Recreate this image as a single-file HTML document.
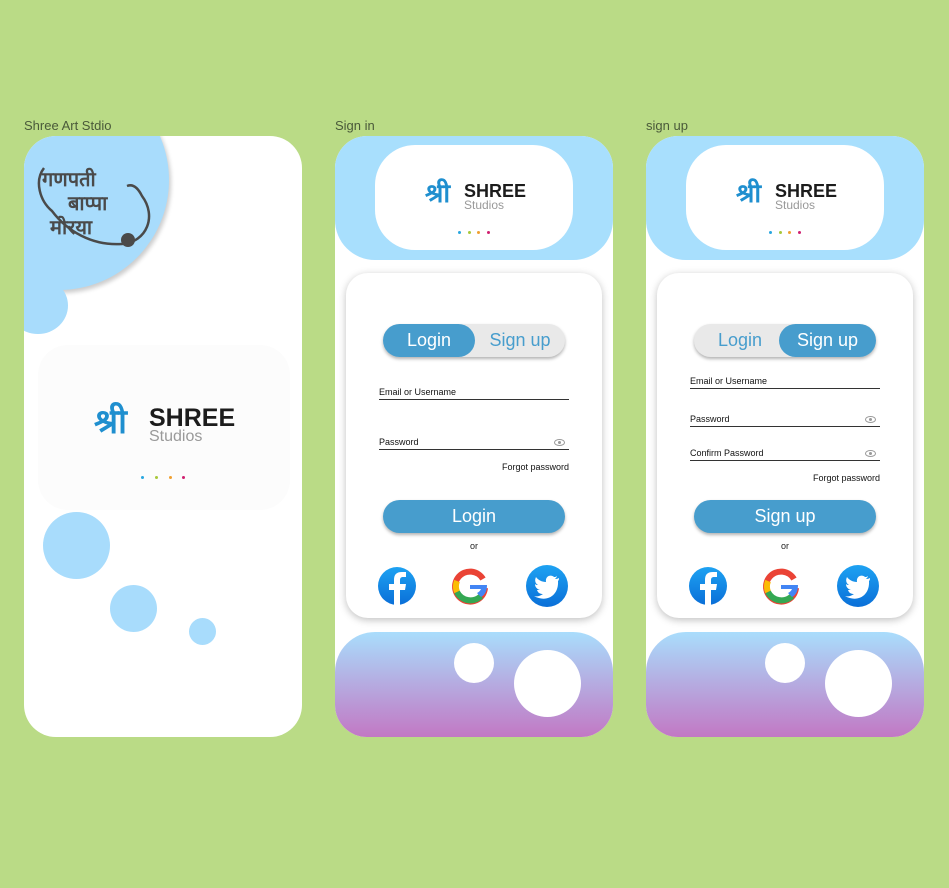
<!DOCTYPE html><html><head><style>
*{margin:0;padding:0;box-sizing:border-box}
body{width:949px;height:888px;background:#badb86;position:relative;font-family:"Liberation Sans",sans-serif;overflow:hidden}
.a{position:absolute}
.lbl{font-size:13px;color:#4a5a3a}
.ph{position:absolute;top:136px;width:278px;height:601px;background:#fff;border-radius:32px;overflow:hidden}
.top{position:absolute;left:0;top:0;width:278px;height:124px;background:#a8dffd;border-radius:0 0 40px 40px}
.pill{position:absolute;left:40px;top:9px;width:198px;height:105px;background:#fff;border-radius:40px}
.card{position:absolute;left:11px;top:137px;width:256px;height:345px;background:#fff;border-radius:22px;box-shadow:0 2px 8px rgba(0,0,0,.25)}
.bot{position:absolute;left:0;top:496px;width:278px;height:105px;border-radius:40px 40px 0 0;background:linear-gradient(#a9ddfc,#c278c4)}
.c{position:absolute;border-radius:50%;background:#a8dcfc}
.w{position:absolute;border-radius:50%;background:#fff}
.tog{position:absolute;left:37px;top:51px;width:182px;height:33px;background:#e9e9e9;border-radius:17px;box-shadow:0 2px 3px rgba(0,0,0,.3);font-size:18px;color:#479dcd}
.tog span{position:absolute;top:0;height:33px;line-height:33px;text-align:center;width:92px}
.on{background:#479dcd;color:#fff;border-radius:17px}
.fl{position:absolute;left:33px;width:190px;border-bottom:1px solid #333;font-size:9px;color:#111;padding-bottom:2px}
.eye{position:absolute;right:4px;bottom:3px;width:11px;height:7px;border:1px solid #999;border-radius:50%}
.eye:after{content:"";position:absolute;left:3px;top:1px;width:3px;height:3px;border-radius:50%;background:#999}
.fg{position:absolute;right:33px;font-size:9px;color:#111}
.btn{position:absolute;left:37px;width:182px;height:33px;background:#479dcd;border-radius:17px;color:#fff;font-size:18px;text-align:center;line-height:33px;box-shadow:0 2px 3px rgba(0,0,0,.3)}
.or{position:absolute;left:0;width:256px;text-align:center;font-size:9px;color:#222}
.shri{position:absolute;color:#1f8fcf;font-family:"Noto Sans CJK SC",sans-serif;font-weight:bold}
.sh{position:absolute;font-weight:bold;color:#1c1c1c}
.st{position:absolute;color:#999}
.d{position:absolute;width:3px;height:3px;border-radius:2px}
</style></head><body>
<div class="a lbl" style="left:24px;top:118px">Shree Art Stdio</div>
<div class="a lbl" style="left:335px;top:118px">Sign in</div>
<div class="a lbl" style="left:646px;top:118px">sign up</div>

<!-- frame 1 -->
<div class="ph" style="left:24px">
 <div class="c" style="left:-75px;top:-66px;width:220px;height:220px;box-shadow:2px 3px 4px rgba(0,0,0,.2)"></div>
 <div class="c" style="left:-16px;top:141px;width:60px;height:57px"></div>
 <svg class="a" style="left:8px;top:20px" width="130" height="100"><path d="M12 12 C2 25 8 45 20 55 C35 75 60 90 90 88 C115 86 125 60 110 40 C105 30 100 28 95 30" fill="none" stroke="#4a4a4a" stroke-width="2.5"/><circle cx="96" cy="84" r="7" fill="#4a4a4a"/></svg>
 <div class="a" style="left:18px;top:30px;font-family:'Noto Sans CJK SC',sans-serif;font-weight:bold;color:#4a4a4a;font-size:20px;line-height:24px;white-space:nowrap">
  <div>गणपती</div><div style="margin-left:26px">बाप्पा</div><div style="margin-left:8px">मोरया</div>
 </div>
 <div class="a" style="left:14px;top:209px;width:252px;height:165px;background:#fcfcfc;border-radius:30px"></div>
 <div class="shri" style="left:70px;top:258px;font-size:34px">श्री</div>
 <div class="sh" style="left:125px;top:268px;font-size:25px">SHREE</div>
 <div class="st" style="left:125px;top:292px;font-size:16px">Studios</div>
 <div class="d" style="left:117px;top:340px;background:#29a7e0"></div>
 <div class="d" style="left:131px;top:340px;background:#a8c83a"></div>
 <div class="d" style="left:145px;top:340px;background:#f0a030"></div>
 <div class="d" style="left:158px;top:340px;background:#d02070"></div>
 <div class="c" style="left:19px;top:376px;width:67px;height:67px"></div>
 <div class="c" style="left:86px;top:449px;width:47px;height:47px"></div>
 <div class="c" style="left:165px;top:482px;width:27px;height:27px"></div>
</div>

<!-- frame 2 -->
<div class="ph" style="left:335px">
 <div class="top"><div class="pill">
  <div class="shri" style="left:50px;top:28px;font-size:26px">श्री</div>
  <div class="sh" style="left:89px;top:36px;font-size:18px">SHREE</div>
  <div class="st" style="left:89px;top:53px;font-size:12px">Studios</div>
  <div class="d" style="left:83px;top:86px;background:#29a7e0"></div>
  <div class="d" style="left:93px;top:86px;background:#a8c83a"></div>
  <div class="d" style="left:102px;top:86px;background:#f0a030"></div>
  <div class="d" style="left:112px;top:86px;background:#d02070"></div>
 </div></div>
 <div class="card">
  <div class="tog"><span class="on" style="left:0">Login</span><span style="left:92px;width:90px">Sign up</span></div>
  <div class="fl" style="top:114px">Email or Username</div>
  <div class="fl" style="top:164px">Password<div class="eye"></div></div>
  <div class="fg" style="top:189px">Forgot password</div>
  <div class="btn" style="top:227px">Login</div>
  <div class="or" style="top:268px">or</div>
 </div>
 <div class="bot"><div class="w" style="left:119px;top:11px;width:40px;height:40px"></div><div class="w" style="left:179px;top:18px;width:67px;height:67px"></div></div>
</div>

<!-- frame 3 -->
<div class="ph" style="left:646px">
 <div class="top"><div class="pill">
  <div class="shri" style="left:50px;top:28px;font-size:26px">श्री</div>
  <div class="sh" style="left:89px;top:36px;font-size:18px">SHREE</div>
  <div class="st" style="left:89px;top:53px;font-size:12px">Studios</div>
  <div class="d" style="left:83px;top:86px;background:#29a7e0"></div>
  <div class="d" style="left:93px;top:86px;background:#a8c83a"></div>
  <div class="d" style="left:102px;top:86px;background:#f0a030"></div>
  <div class="d" style="left:112px;top:86px;background:#d02070"></div>
 </div></div>
 <div class="card">
  <div class="tog"><span style="left:0">Login</span><span class="on" style="left:85px;width:97px">Sign up</span></div>
  <div class="fl" style="top:103px">Email or Username</div>
  <div class="fl" style="top:141px">Password<div class="eye"></div></div>
  <div class="fl" style="top:175px">Confirm Password<div class="eye"></div></div>
  <div class="fg" style="top:200px">Forgot password</div>
  <div class="btn" style="top:227px">Sign up</div>
  <div class="or" style="top:268px">or</div>
 </div>
 <div class="bot"><div class="w" style="left:119px;top:11px;width:40px;height:40px"></div><div class="w" style="left:179px;top:18px;width:67px;height:67px"></div></div>
</div>

<svg class="a" style="left:0;top:0" width="949" height="888">
<defs>
<linearGradient id="fb" x1="0" y1="0" x2="0" y2="1"><stop offset="0" stop-color="#1ea2f2"/><stop offset="1" stop-color="#0a6fd8"/></linearGradient>
<g id="ic">
 <circle cx="0" cy="0" r="19" fill="url(#fb)"/>
 <path d="M3 19 V4 H8 L9 -2 H3 V-6 C3 -8 4 -9 6 -9 H9 V-14 H5 C-1 -14 -3 -11 -3 -6 V-2 H-8 V4 H-3 V19 Z" fill="#fff"/>
 <g transform="translate(73,0)">
  <path d="M13 -7 A15 15 0 1 0 15 2" fill="none" stroke="#ea4335" stroke-width="6"/>
  <path d="M-13 -5 A15 15 0 0 0 -13 6" fill="none" stroke="#fbbc05" stroke-width="6"/>
  <path d="M-13 6 A15 15 0 0 0 11 10" fill="none" stroke="#34a853" stroke-width="6"/>
  <path d="M0 -1 H17 C17 5 15 9 11 11 L7 7 C9 6 10 5 11 3 H0 Z" fill="#4285f4"/>
 </g>
 <g transform="translate(150,0)">
  <circle r="21" fill="url(#fb)"/>
  <path d="M12 -8 C10 -7 9 -7 8 -7 C9 -8 10 -9 10 -10 C9 -9 8 -9 7 -9 C4 -12 -2 -10 -1 -4 C-5 -4 -9 -6 -11 -9 C-13 -5 -11 -2 -9 -1 C-10 -1 -11 -1 -12 -2 C-12 1 -10 3 -7 4 C-8 4 -9 4 -10 4 C-9 7 -7 8 -4 8 C-7 10 -10 11 -13 10 C-1 17 12 10 11 -5 C12 -6 12 -7 12 -8 Z" fill="#fff"/>
 </g>
</g>
</defs>
<use href="#ic" x="397" y="586"/>
<use href="#ic" x="708" y="586"/>
</svg>
</body></html>
